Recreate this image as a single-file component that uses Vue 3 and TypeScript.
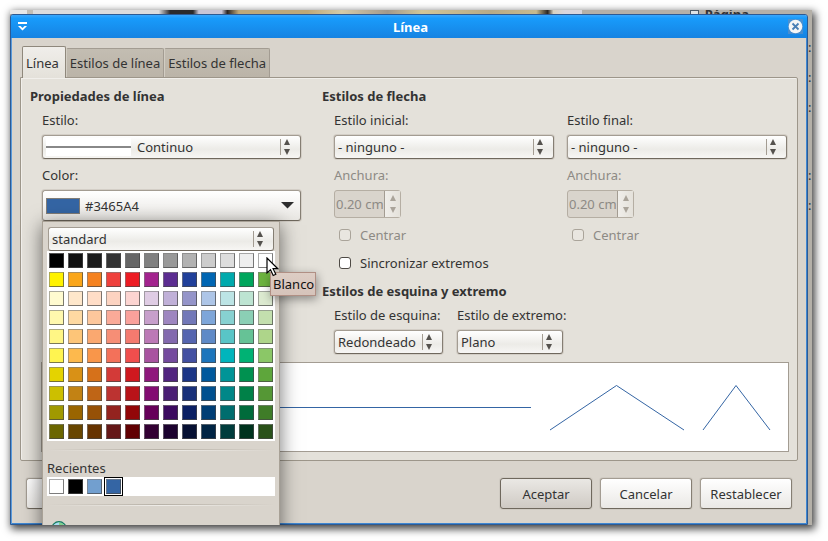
<script setup lang="ts">
import { ref } from 'vue'

interface ArrowEnd {
  id: string
  label: string
}

const tabs = ['Línea', 'Estilos de línea', 'Estilos de flecha']
const activeTab = ref('Línea')
const lineColor = ref('#3465A4')
const synchronize = ref(false)

const arrowEnds: ArrowEnd[] = [
  { id: 'start', label: 'Estilo inicial:' },
  { id: 'end', label: 'Estilo final:' },
]

const palette: string[] = `
000000 111111 1c1c1c 333333 666666 808080 999999 b2b2b2 cccccc dddddd eeeeee ffffff
fff200 faa61a f58220 ef413d ed1c24 a3238e 5c2d91 21409a 0066b3 00aaad 00a65d 6cb33f
fffbd0 fee7cb ffddc7 fcd3c1 fcd4d1 dfcce4 c0b0d8 9494c9 adc5e7 bce4e5 bde4d2 dcead0
fff8ae fed9a2 fdc79c faaa98 faa19b c79fcb 9e86c0 7278b8 7ea6d9 87d1d1 8bcfb5 c3dfae
fff685 fdc578 faa870 f68e76 f47a6f bc79b6 8369ae 5565b0 5f8ac7 59c5c7 66c296 aed58a
fff450 fdb94d f9964a f3715a f04e4d a953a0 744a9e 4350a2 1c75bc 00b5bc 00b274 8bc767
e4d300 d99116 d6711a d33a38 cf181f 8f187c 51247f 1c3687 00599d 009497 009150 5ea63b
ccbf00 c28214 bf6516 bc3331 b81319 830c72 4a1e74 18307a 00508f 008788 008148 559735
a09900 9a6500 965107 93231f 920608 660059 3b0a5f 0a1f63 003e75 006d6e 006b3b 3f7c28
6b6600 684600 663300 651818 610002 330033 1c022f 061033 002444 003c3c 00331e 2a5119
`.trim().split(/\s+/).map((hex) => '#' + hex)

const recent = ['#ffffff', '#000000', '#729fcf', '#3465a4']
</script>

<template>
  <div class="screen">
    <div class="behind-top">
      <div class="behind-photo"></div>
      <div class="behind-side">
        <span class="expander"></span>
        <b>Página</b>
      </div>
    </div>
    <div class="workspace">
      <main class="dialog">
        <header class="titlebar">
          <button class="title-button" aria-label="Menú de ventana">
            <svg width="11" height="10" viewBox="0 0 11 10">
              <path d="M1 0h9v2H1z" fill="#fff" />
              <path d="M1 4l4.500 4.500L10 4H7.500l-2 2-2-2z" fill="#fff" />
            </svg>
          </button>
          <h1>Línea</h1>
          <button class="title-button" aria-label="Cerrar">
            <svg width="15" height="15" viewBox="0 0 15 15">
              <rect width="15" height="15" fill="#5d8fc4" opacity=".7" />
              <circle cx="7.500" cy="7.500" r="6.800" fill="#f6f6f6" />
              <path d="M4.500 4.500l6 6M10.500 4.500l-6 6" stroke="#4a7fb5" stroke-width="1.800" />
            </svg>
          </button>
        </header>

        <div class="content">
          <nav class="tabs" role="tablist">
            <button
              v-for="tab in tabs"
              :key="tab"
              role="tab"
              class="tab"
              :class="{ active: tab === activeTab }"
              :aria-selected="tab === activeTab"
              @click="activeTab = tab"
            >
              {{ tab }}
            </button>
          </nav>

          <section class="panel">
            <div class="columns">
              <section class="group">
                <h2>Propiedades de línea</h2>
                <div class="fields">
                  <div class="field">
                    <label for="line-style">Estilo:</label>
                    <div class="combo with-sample">
                      <select id="line-style"><option>Continuo</option></select>
                      <span class="sample"></span>
                      <span class="arrows"></span>
                    </div>
                  </div>
                  <div class="field">
                    <label for="line-color">Color:</label>
                    <div class="color-picker">
                      <button id="line-color" class="color-button" aria-haspopup="true" aria-expanded="true">
                        <span class="chip" :style="{ background: lineColor }"></span>
                        <span class="hex">{{ lineColor }}</span>
                        <svg width="13" height="7" viewBox="0 0 13 7"><path d="M0 0h13L6.500 6.500z" fill="#2e2e2e" /></svg>
                      </button>

                      <div class="popup">
                        <div class="combo">
                          <select aria-label="Paleta"><option>standard</option></select>
                          <span class="arrows"></span>
                        </div>
                        <div class="swatches">
                          <div v-for="(color, i) in palette" :key="i" class="cell">
                            <button
                              class="swatch"
                              :style="{ backgroundColor: color }"
                              :aria-label="color"
                              @click="lineColor = color.toUpperCase()"
                            ></button>
                            <template v-if="color === '#ffffff'">
                              <div class="tooltip" role="tooltip">Blanco</div>
                              <svg class="pointer" width="13" height="20" viewBox="0 0 13 20">
                                <path
                                  d="M1 1v15l3.500-3.200 2.700 5.700 2.600-1.200-2.700-5.600h4.700z"
                                  fill="#fff"
                                  stroke="#000"
                                  stroke-width="1.200"
                                />
                              </svg>
                            </template>
                          </div>
                        </div>
                        <hr />
                        <div class="recent-label">Recientes</div>
                        <div class="swatches recent">
                          <div
                            v-for="color in recent"
                            :key="color"
                            class="cell"
                            :class="{ selected: color === lineColor.toLowerCase() }"
                          >
                            <button class="swatch" :style="{ backgroundColor: color }" :aria-label="color"></button>
                          </div>
                        </div>
                        <hr />
                        <button class="custom" aria-label="Color personalizado">
                          <svg width="16" height="16" viewBox="0 0 16 16">
                            <circle cx="8" cy="8" r="7.300" fill="#8fd0cf" stroke="#14795f" stroke-width="1.200" />
                            <path d="M8 8V1.500A6.500 6.500 0 0 1 14 6z" fill="#7fd08a" />
                            <path d="M8 8L2 6a6.500 6.500 0 0 1 6-4.500z" fill="#a9dcf0" />
                          </svg>
                        </button>
                      </div>
                    </div>
                  </div>
                </div>
              </section>

              <div class="group">
                <section>
                  <h2>Estilos de flecha</h2>
                  <div class="fields arrow-ends">
                    <div v-for="end in arrowEnds" :key="end.id">
                      <div class="field">
                        <label :for="`${end.id}-style`">{{ end.label }}</label>
                        <div class="combo">
                          <select :id="`${end.id}-style`"><option>- ninguno -</option></select>
                          <span class="arrows"></span>
                        </div>
                      </div>
                      <div class="field">
                        <label class="off" :for="`${end.id}-width`">Anchura:</label>
                        <div class="spin">
                          <input :id="`${end.id}-width`" type="text" value="0.20 cm" disabled />
                          <span class="arrows"></span>
                        </div>
                      </div>
                      <label class="check off"><input type="checkbox" disabled />Centrar</label>
                    </div>
                  </div>
                  <div class="fields">
                    <label class="check"><input v-model="synchronize" type="checkbox" />Sincronizar extremos</label>
                  </div>
                </section>
                <section>
                  <h2>Estilos de esquina y extremo</h2>
                  <div class="fields ends">
                    <div class="field">
                      <label for="corner">Estilo de esquina:</label>
                      <div class="combo">
                        <select id="corner"><option>Redondeado</option></select>
                        <span class="arrows"></span>
                      </div>
                    </div>
                    <div class="field">
                      <label for="cap">Estilo de extremo:</label>
                      <div class="combo">
                        <select id="cap"><option>Plano</option></select>
                        <span class="arrows"></span>
                      </div>
                    </div>
                  </div>
                </section>
              </div>
            </div>

            <div class="preview">
              <svg viewBox="0 0 746 88">
                <g fill="none" stroke="#3465a4">
                  <path d="M6 44.500H489" />
                  <path d="M508 67L574.500 22.500 642 67" />
                  <path d="M661 67L694 22.500 728 67" />
                </g>
              </svg>
            </div>
          </section>

          <footer class="actions">
            <button class="push help">Ayuda</button>
            <button class="push default">Aceptar</button>
            <button class="push">Cancelar</button>
            <button class="push">Restablecer</button>
          </footer>
        </div>
      </main>
      <aside class="behind-right">
        <span>:</span><span>:</span><span>:</span><span class="gap">:</span><span>:</span>
      </aside>
    </div>
  </div>
</template>

<style>
body {
  background: #fff;
}
</style>

<style scoped>
.screen,
.screen * {
  box-sizing: border-box;
}
.screen {
  margin: 10px 16px 16px 10px;
  font: 13px/18px 'Noto Sans', sans-serif;
  color: #333;
  background: #b4b0a8;
  overflow: hidden;
  box-shadow: 2px 3px 8px 1px rgba(0, 0, 0, 0.75);
}
button,
input,
select {
  font: inherit;
  color: inherit;
  margin: 0;
  padding: 0;
}
h1,
h2 {
  margin: 0;
  font-size: 13px;
  line-height: 20px;
}
svg {
  display: block;
}

/* Strips of the application that show around the dialog */
.behind-top {
  display: grid;
  grid-template-columns: minmax(0, 572fr) minmax(0, 230fr);
  height: 4px;
  overflow: hidden;
}
.behind-photo {
  background: linear-gradient(
    90deg,
    #e8e8e8 0 3%, #c3beb5 3% 4%, #dcdcdd 4% 26%, #2b2a2c 28% 32%, #c9c5d6 33% 37%,
    #2b2422 38%, #bfa878 40% 52%, #d5cba8 58%, #a3998c 66%, #d2c698 72%, #b8aa86 84%,
    #c8ba8e 92%, #2c2722 94%, #d9d2c0 95%, #dad6dd 97% 100%
  );
}
.behind-side {
  display: flex;
  justify-content: flex-end;
  gap: 6px;
  padding-right: 63px;
}
.behind-side b {
  font-size: 13px;
  line-height: 8px;
}
.expander {
  width: 9px;
  height: 9px;
  border: 1px solid #4c5a68;
  background: #dfe3e6;
}
.workspace {
  display: grid;
  grid-template-columns: minmax(0, 1fr) 4px;
}
.behind-right {
  display: flex;
  flex-direction: column;
  gap: 12px;
  padding-top: 24px;
  overflow: hidden;
}
.behind-right .gap {
  margin-top: 38px;
}

/* Dialog frame */
.dialog {
  border: 1px solid #2c5a94;
  border-radius: 3px 3px 0 0;
  background: #d9d4cc;
  box-shadow: inset 1px 0 #5b9bdc, inset -1px -1px #3f87d2;
}
.titlebar {
  display: grid;
  grid-template-columns: 16px 1fr 16px;
  align-items: center;
  height: 23px;
  padding: 0 3px 0 6px;
  border-radius: 2px 2px 0 0;
  background: linear-gradient(#3aa7fb, #189bfb 15%, #1683e2);
}
.titlebar h1 {
  color: #fff;
  text-align: center;
}
.title-button {
  border: 0;
  background: none;
}
.content {
  padding: 8px 9px 15px 9px;
}

/* Tabs */
.tabs {
  display: flex;
  align-items: flex-end;
  padding-left: 2px;
}
.tab {
  height: 29px;
  padding: 0 3px;
  border: 1px solid #a39c92;
  border-left-color: #d2cdc3;
  border-bottom: 0;
  border-radius: 2px 2px 0 0;
  background: linear-gradient(#c3bdb2, #bbb4a8);
}
.tab.active {
  position: relative;
  height: 32px;
  padding: 0 6px 0 3px;
  margin-bottom: -1px;
  border-color: #8f887c;
  background: linear-gradient(#f0eeea, #e4e1da);
}

/* Tab page */
.panel {
  padding: 8px 10px 8px 9px;
  border: 1px solid #9d968a;
  border-radius: 0 2px 2px 2px;
  background: #e4e1da;
  box-shadow: inset 1px 1px #f1efeb;
}
.columns {
  display: grid;
  grid-template-columns: minmax(0, 271fr) minmax(0, 465fr);
  gap: 21px;
}
.fields {
  padding-left: 12px;
}
h2 {
  margin-bottom: 5px;
}
.field {
  display: flex;
  flex-direction: column;
  gap: 6px;
  margin-bottom: 7px;
}
.off {
  color: #8d8a85;
}
.arrow-ends {
  display: grid;
  grid-template-columns: 1fr 1fr;
  gap: 13px;
}
.ends {
  display: grid;
  grid-template-columns: 109px 106px;
  gap: 14px;
  white-space: nowrap;
}
.ends .field {
  margin-bottom: 0;
}

/* Drop-downs: the list box and its decorations share one grid cell */
.combo {
  display: grid;
  height: 24px;
  border-radius: 3px;
}
.combo > * {
  grid-area: 1 / 1;
}
.combo select {
  appearance: none;
  width: 100%;
  padding: 0 22px 0 3px;
  border: 1px solid #8f887c;
  border-color: #a39c92 #857e73 #6f685d #a39c92;
  border-radius: 3px;
  background: linear-gradient(#fff, #ecebe7 60%, #f7f6f4);
  box-shadow: 0 0 0 1px #d3cec6;
}
.combo .arrows {
  justify-self: end;
  align-self: center;
  margin-right: 7px;
}
.arrows {
  position: relative;
  display: flex;
  flex-direction: column;
  justify-content: space-between;
  align-items: flex-end;
  width: 14px;
  height: 16px;
  border-left: 1px solid #a39c92;
  color: #55524e;
  pointer-events: none;
}
.arrows::before,
.arrows::after {
  content: '';
  width: 6px;
  height: 6px;
  margin-right: 4px;
  background: currentColor;
  clip-path: polygon(50% 0, 100% 100%, 0 100%);
}
.arrows::after {
  clip-path: polygon(0 0, 100% 0, 50% 100%);
}
.with-sample select {
  padding-left: 94px;
}
.sample {
  align-self: center;
  width: 85px;
  height: 18px;
  margin-left: 4px;
  background: linear-gradient(#fff 8px, #888 8px 10px, #fff 10px);
  pointer-events: none;
}

/* Spin box */
.spin {
  display: flex;
  align-self: flex-start;
  height: 28px;
  border: 1px solid #b5aea3;
  border-radius: 3px;
  background: #d9d4cc;
}
.spin input {
  width: 49px;
  padding: 0 1px;
  border: 0;
  background: none;
  color: #8d8a85;
}
.spin .arrows {
  width: 16px;
  height: 26px;
  padding: 4px 0;
  background: linear-gradient(90deg, #f0eeea, #e4e1da);
  color: #aaa49a;
}

.check {
  display: flex;
  align-items: center;
  gap: 9px;
  height: 20px;
  margin-bottom: 8px;
}
.check input {
  appearance: none;
  width: 12px;
  height: 12px;
  margin-left: 5px;
  border: 1px solid #4e4a45;
  border-radius: 3px;
  background: #fff;
}
.check input:disabled {
  border-color: #aaa49a;
  background: #e9e6e0;
}
.check input:checked {
  background: #3465a4;
}

/* Colour button and its popup */
.color-picker {
  position: relative;
}
.color-button {
  display: flex;
  align-items: center;
  gap: 5px;
  width: 100%;
  height: 31px;
  padding: 0 6px 0 3px;
  border: 1px solid #6f685d;
  border-color: #a39c92 #857e73 #6f685d #a39c92;
  border-radius: 3px;
  background: linear-gradient(#fff, #e9e7e3);
  box-shadow: 0 0 0 1px #d3cec6;
  text-align: left;
}
.hex {
  flex: 1;
}
.chip {
  width: 34px;
  height: 16px;
  border: 1px solid #807c76;
}
.popup {
  position: absolute;
  z-index: 2;
  top: 31px;
  left: 0;
  width: 238px;
  height: 330px;
  padding: 5px 4px;
  border: 1px solid #a8a196;
  background: #d9d4cc;
  box-shadow: 0 4px 18px rgba(0, 0, 0, 0.55);
}
.popup .combo {
  margin: 0 1px;
}
.popup .combo select {
  box-shadow: none;
}
.swatches {
  display: grid;
  grid-template-columns: repeat(12, 19px);
  background: #fff;
}
.cell {
  position: relative;
  display: grid;
  place-items: center;
  height: 19px;
}
.swatch {
  width: 15px;
  height: 15px;
  border: 1px solid;
  border-color: rgba(128, 128, 128, 0.65) rgba(70, 70, 70, 0.7) rgba(70, 70, 70, 0.7) rgba(128, 128, 128, 0.65);
  background-clip: border-box;
}
.cell.selected {
  border: 1px solid #000;
}
.tooltip {
  position: absolute;
  z-index: 3;
  left: 14px;
  top: 21px;
  height: 24px;
  padding: 2px 1px 2px 2px;
  border: 1px solid #b08f84;
  background: linear-gradient(#ddcdc4, #d6c3ba);
  box-shadow: 1px 3px 10px rgba(0, 0, 0, 0.4);
  color: #111;
}
.pointer {
  position: absolute;
  z-index: 4;
  left: 10px;
  top: 6px;
}
hr {
  height: 2px;
  margin: 8px 0;
  border: 0;
  background: linear-gradient(90deg, transparent, #b8b2a8, transparent) top / 100% 1px no-repeat,
    linear-gradient(90deg, transparent, #eeece8, transparent) bottom / 100% 1px no-repeat;
}
.custom {
  margin: 7px 4px;
  border: 0;
  background: none;
}

.preview {
  margin: 8px -2px 0 11px;
  border: 1px solid #a39c92;
  background: #fff;
}

.actions {
  display: flex;
  gap: 8px;
  padding: 17px 6px 0;
}
.push {
  width: 92px;
  height: 31px;
  border: 1px solid #857e73;
  border-color: #a39c92 #857e73 #6f685d #a39c92;
  border-radius: 3px;
  background: linear-gradient(#fff, #eae8e5);
  box-shadow: 0 0 0 1px #cfcac2;
}
.push.help {
  margin-right: auto;
}
.push.default {
  border-color: #6f685d;
  background: linear-gradient(#eae8e4, #cfcac4);
}
</style>
